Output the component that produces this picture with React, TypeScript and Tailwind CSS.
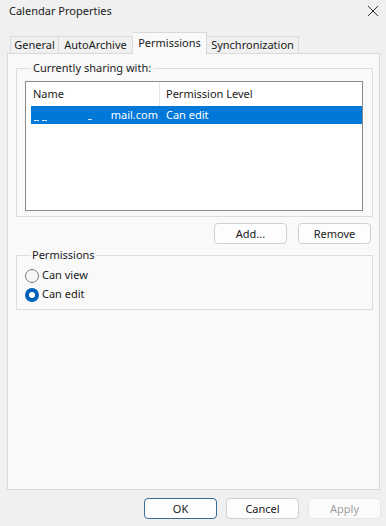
import React from "react";

function Btn({ children, className = "", disabled = false }: { children: React.ReactNode; className?: string; disabled?: boolean }) {
  return (
    <button
      className={
        "w-[73px] h-[21px] rounded-[4px] border flex items-center justify-center leading-none " +
        (disabled ? "text-[#a0a0a0] border-[#e6e6e6] bg-[#fbfbfb] " : "text-[#1a1a1a] border-[#d0d0d0] bg-[#fdfdfd] ") +
        className
      }
    >
      {children}
    </button>
  );
}

function Radio({ checked, label }: { checked: boolean; label: string }) {
  return (
    <div className="flex items-center h-[19px]">
      {checked ? (
        <span className="w-[14px] h-[14px] rounded-full bg-[#005fb8] flex items-center justify-center">
          <span className="w-[6px] h-[6px] rounded-full bg-white" />
        </span>
      ) : (
        <span className="w-[14px] h-[14px] rounded-full border border-[#7a7a7a] bg-[#f6f6f6]" />
      )}
      <span className="ml-[3px] text-[#1a1a1a]">{label}</span>
    </div>
  );
}

export default function App() {
  return (
    <div className="w-[386px] h-[526px] bg-[#f0f0f0] flex flex-col font-['Noto_Sans',sans-serif] text-[11px] text-[#1a1a1a] overflow-hidden">
      {/* title bar */}
      <div className="h-[21px] flex items-center justify-between pl-[9px] pr-[6px] pt-[1px]">
        <span className="text-[11px]">Calendar Properties</span>
        <svg width="12" height="12" viewBox="0 0 12 12" className="mr-[1px]">
          <path d="M1 1 L11 11 M11 1 L1 11" stroke="#333" strokeWidth="1" />
        </svg>
      </div>

      {/* tabs */}
      <div className="mt-[11px] h-[21px] flex items-end pl-[10px] relative z-10">
        <div className="h-[17px] w-[49px] border border-b-0 border-[#d9d9d9] bg-[#f0f0f0] flex items-center justify-center">General</div>
        <div className="h-[17px] w-[74px] border border-b-0 border-l-0 border-[#d9d9d9] bg-[#f0f0f0] flex items-center justify-center">AutoArchive</div>
        <div className="h-[22px] w-[74px] border border-b-0 border-l-0 border-[#d9d9d9] bg-[#f9f9f9] flex items-center justify-center -mb-px pb-[1px]">Permissions</div>
        <div className="h-[17px] w-[92px] border border-b-0 border-l-0 border-[#d9d9d9] bg-[#f0f0f0] flex items-center justify-center">Synchronization</div>
      </div>

      {/* panel */}
      <div className="ml-[7px] w-[373px] h-[437px] border border-[#dadada] bg-[#f9f9f9] pt-[6px] pl-[8px]">
        <fieldset className="w-[357px] h-[157px] border border-[#dcdcdc] px-[8px] pb-[4px]">
          <legend className="ml-[6px] px-[2px] leading-[16px]">Currently sharing with:</legend>
          <div className="mt-[5px] w-[338px] h-[130px] border border-[#8a8a8a] bg-white">
            <div className="h-[24px] flex items-center">
              <div className="w-[134px] h-full flex items-center pl-[7px] border-r border-[#e5e5e5]">Name</div>
              <div className="pl-[6px]">Permission Level</div>
            </div>
            <div className="ml-[5px] w-[331px] h-[18px] bg-[#0078d7] text-white flex items-center">
              <div className="w-[129px] h-full flex items-center pr-[2px] relative">
                <span className="absolute left-[3px] top-[14px] w-[5px] h-px bg-[#cfe4f7]" />
                <span className="absolute left-[11px] top-[14px] w-[5px] h-px bg-[#cfe4f7]" />
                <span className="absolute left-[57px] top-[13px] w-[4px] h-px bg-[#cfe4f7]" />
                <span className="ml-auto">mail.com</span>
              </div>
              <div className="pl-[6px]">Can edit</div>
            </div>
          </div>
        </fieldset>

        <div className="mt-[6px] w-[355px] flex justify-end gap-[11px]">
          <Btn>Add...</Btn>
          <Btn>Remove</Btn>
        </div>

        <fieldset className="mt-[3px] w-[357px] h-[63px] border border-[#dcdcdc] px-[8px]">
          <legend className="ml-[6px] px-[1px] leading-[16px]">Permissions</legend>
          <div className="mt-[3px] flex flex-col">
            <Radio checked={false} label="Can view" />
            <Radio checked={true} label="Can edit" />
          </div>
        </fieldset>
      </div>

      {/* bottom buttons */}
      <div className="mt-[8px] flex justify-end gap-[9px] pr-[5px]">
        <Btn className="!border-[#3b6c96]">OK</Btn>
        <Btn>Cancel</Btn>
        <Btn disabled>Apply</Btn>
      </div>
    </div>
  );
}
